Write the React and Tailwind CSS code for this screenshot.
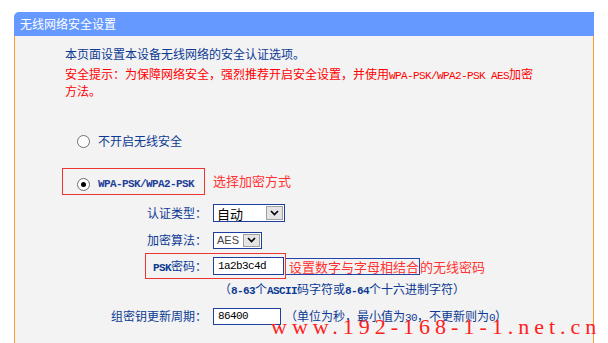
import React from "react";

const cjk = "font-['Noto_Sans_CJK_SC',sans-serif]";
const mono = "font-['Liberation_Mono',monospace] text-[11px] tracking-[-0.6px] leading-none";

function Chevron() {
  return (
    <svg width="9" height="6" viewBox="0 0 9 6">
      <path d="M1 1 L4.5 4.5 L8 1" stroke="#000" strokeWidth="1.6" fill="none" />
    </svg>
  );
}

function Radio({ checked }) {
  return (
    <span className="flex h-[13px] w-[13px] shrink-0 items-center justify-center rounded-full border border-[#6f6f6f] bg-white">
      {checked && <span className="h-[5px] w-[5px] rounded-full bg-black" />}
    </span>
  );
}

function Label({ children }) {
  return (
    <div className="h-[16px] w-[192px] shrink-0 whitespace-nowrap text-right text-[12px] leading-[16px] text-[#0c3a94]">
      {children}
    </div>
  );
}

export default function App() {
  return (
    <div className={`relative h-[343px] w-[608px] overflow-hidden bg-white ${cjk}`}>
      <div className="mx-[14px] mt-[12px] flex flex-col">
        <div className="flex h-[24px] items-center rounded-tl-[5px] bg-[#6699ff] pl-[6px] text-[12px] leading-none text-white">
          无线网络安全设置
        </div>
        <div className="flex h-[320px] flex-col border-x border-[#ff9933] bg-[#f3f3f3] pt-[9px]">
          <div className="h-[18px] pl-[50px] text-[12px] leading-[18px] text-[#0c3a94]">
            本页面设置本设备无线网络的安全认证选项。
          </div>
          <div className="mt-[2px] h-[17px] whitespace-nowrap pl-[50px] text-[12px] leading-[17px] text-[#ff0000]">
            安全提示：为保障网络安全，强烈推荐开启安全设置，并使用
            <span className={mono}>WPA-PSK/WPA2-PSK AES</span>
            加密
          </div>
          <div className="h-[17px] pl-[50px] text-[12px] leading-[17px] text-[#ff0000]">方法。</div>

          <div className="ml-[47px] mt-[28px] flex h-[27px] w-[143px] items-center gap-[8px] border border-transparent pl-[14px] pt-[1px]">
            <Radio />
            <span className="text-[12px] leading-none text-[#0c3a94]">不开启无线安全</span>
          </div>

          <div className="ml-[47px] mt-[14px] flex items-start gap-[8px]">
            <div className="flex h-[27px] w-[143px] items-center gap-[8px] border border-[#ee3333] pl-[14px] pt-[5px]">
              <Radio checked />
              <span className={`${mono} font-bold text-[#1f3f9a]`}>WPA-PSK/WPA2-PSK</span>
            </div>
            <span className="mt-[6px] text-[13px] leading-[14px] text-[#ff3333]">选择加密方式</span>
          </div>

          <div className="mt-[7px] flex h-[22px] items-center">
            <Label>认证类型：</Label>
            <div className="ml-[6px] flex h-[18px] w-[72px] items-center border border-[#1f3f9f] bg-white">
              <span className="flex-1 pl-[3px] text-[13px] leading-none text-black">自动</span>
              <span className="mr-[1px] flex h-[14px] w-[17px] items-center justify-center border border-[#a0a0a0] bg-[#e4e4e4]">
                <Chevron />
              </span>
            </div>
          </div>

          <div className="mt-[5px] flex h-[22px] items-center">
            <Label>加密算法：</Label>
            <div className="ml-[6px] flex h-[17px] w-[49px] items-center border border-[#1f3f9f] bg-white">
              <span className="flex-1 pl-[3px] font-['Liberation_Sans',sans-serif] text-[11px] leading-none text-[#444]">
                AES
              </span>
              <span className="mr-[1px] flex h-[13px] w-[17px] items-center justify-center border border-[#a0a0a0] bg-[#e4e4e4]">
                <Chevron />
              </span>
            </div>
          </div>

          <div className="relative mt-[2px] flex h-[26px] items-center">
            <div className="absolute left-[130px] top-0 h-full w-[141px] border border-[#ee3333]" />
            <Label>
              <span className={`${mono} font-bold`}>PSK</span>密码：
            </Label>
            <div className="ml-[6px] flex h-[18px] w-[71px] items-center border border-[#1f3f9f] bg-white pl-[4px]">
              <span className={`${mono} text-black`}>1a2b3c4d</span>
            </div>
            <span className="ml-[1px] flex h-[17px] items-center border border-[#2244aa] pl-[3px] text-[13px] leading-none text-[#ff3333]">
              设置数字与字母相结合
            </span>
            <span className="text-[13px] leading-none text-[#ff3333]">的无线密码</span>
          </div>

          <div className="mt-[2px] h-[16px] whitespace-nowrap pl-[204px] text-[12px] leading-[16px] text-[#0c3a94]">
            （<span className={`${mono} font-bold`}>8-63</span>个
            <span className={`${mono} font-bold`}>ASCII</span>码字符或
            <span className={`${mono} font-bold`}>8-64</span>个十六进制字符）
          </div>

          <div className="mt-[8px] flex h-[22px] items-center">
            <Label>组密钥更新周期：</Label>
            <div className="ml-[6px] flex h-[17px] w-[68px] items-center border border-[#1f3f9f] bg-white pl-[4px]">
              <span className={`${mono} text-black`}>86400</span>
            </div>
            <span className="ml-[4px] h-[16px] whitespace-nowrap text-[12px] leading-[16px] text-[#0c3a94]">
              （单位为秒，最小值为<span className={mono}>30</span>，不更新则为
              <span className={mono}>0</span>）
            </span>
          </div>
        </div>
      </div>

      <div className="absolute left-[271px] top-[316px] whitespace-nowrap font-['Liberation_Serif',serif] text-[22px] leading-[22px] tracking-[5px] text-[#ff2020]">
        www.192-168-1-1.net.cn
      </div>
    </div>
  );
}
